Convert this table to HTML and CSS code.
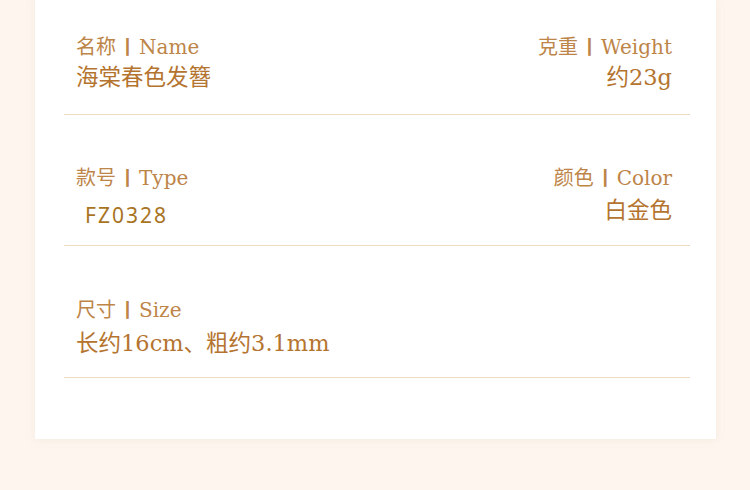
FILE: index.html
```html
<!DOCTYPE html>
<html lang="zh">
<head>
<meta charset="utf-8">
<link rel="stylesheet" href="styles.css">
</head>
<body>
<div class="card">
  <div class="row row1">
    <div class="col">
      <div class="label">名称<span class="sep">丨</span>Name</div>
      <div class="value v1">海棠春色发簪</div>
    </div>
    <div class="col right">
      <div class="label">克重<span class="sep">丨</span>Weight</div>
      <div class="value v1">约23g</div>
    </div>
  </div>
  <div class="row row2">
    <div class="col">
      <div class="label">款号<span class="sep">丨</span>Type</div>
      <div class="value code">FZ0328</div>
    </div>
    <div class="col right">
      <div class="label">颜色<span class="sep">丨</span>Color</div>
      <div class="value v2">白金色</div>
    </div>
  </div>
  <div class="row row3">
    <div class="col">
      <div class="label">尺寸<span class="sep">丨</span>Size</div>
      <div class="value v3">长约16cm、粗约3.1mm</div>
    </div>
  </div>
</div>
</body>
</html>
```

FILE: styles.css
```css
html, body {
  margin: 0;
  padding: 0;
  background: #fdf5ee;
}
body {
  width: 750px;
  height: 490px;
  overflow: hidden;
  font-family: "DejaVu Serif", "Noto Sans CJK SC", serif;
}
.card {
  margin-left: 35px;
  width: 681px;
  height: 439px;
  background: #ffffff;
  box-shadow: 0 0 6px rgba(240, 225, 210, 0.5);
  padding-left: 29px;
  box-sizing: border-box;
}
.row {
  width: 626px;
  display: flex;
  justify-content: space-between;
  padding: 0 18px 0 12px;
  box-sizing: border-box;
  border-bottom: 1px solid #eddcc3;
}
.row1 { height: 115px; padding-top: 31px; }
.row2 { height: 131px; padding-top: 47px; }
.row3 { height: 132px; padding-top: 48px; }
.col {
  display: flex;
  flex-direction: column;
}
.right { align-items: flex-end; text-align: right; }
.label {
  height: 30px;
  font-size: 20px;
  line-height: 30px;
  color: #bd8548;
  white-space: nowrap;
}
.sep {
  font-family: "Noto Sans CJK SC", sans-serif;
  font-size: 19px;
  font-weight: 700;
  margin: 0 2px;
}
.value {
  height: 30px;
  font-size: 22.5px;
  line-height: 30px;
  color: #b4742f;
  white-space: nowrap;
}
.v1 { margin-top: 1px; }
.v2 { margin-top: 3px; }
.v3 { margin-top: 4px; }
.code {
  font-family: "Noto Sans", "DejaVu Sans", sans-serif;
  color: #a8741f;
  font-size: 21px;
  margin-top: 8px;
  margin-left: 9px;
  letter-spacing: 2px;
}
```
